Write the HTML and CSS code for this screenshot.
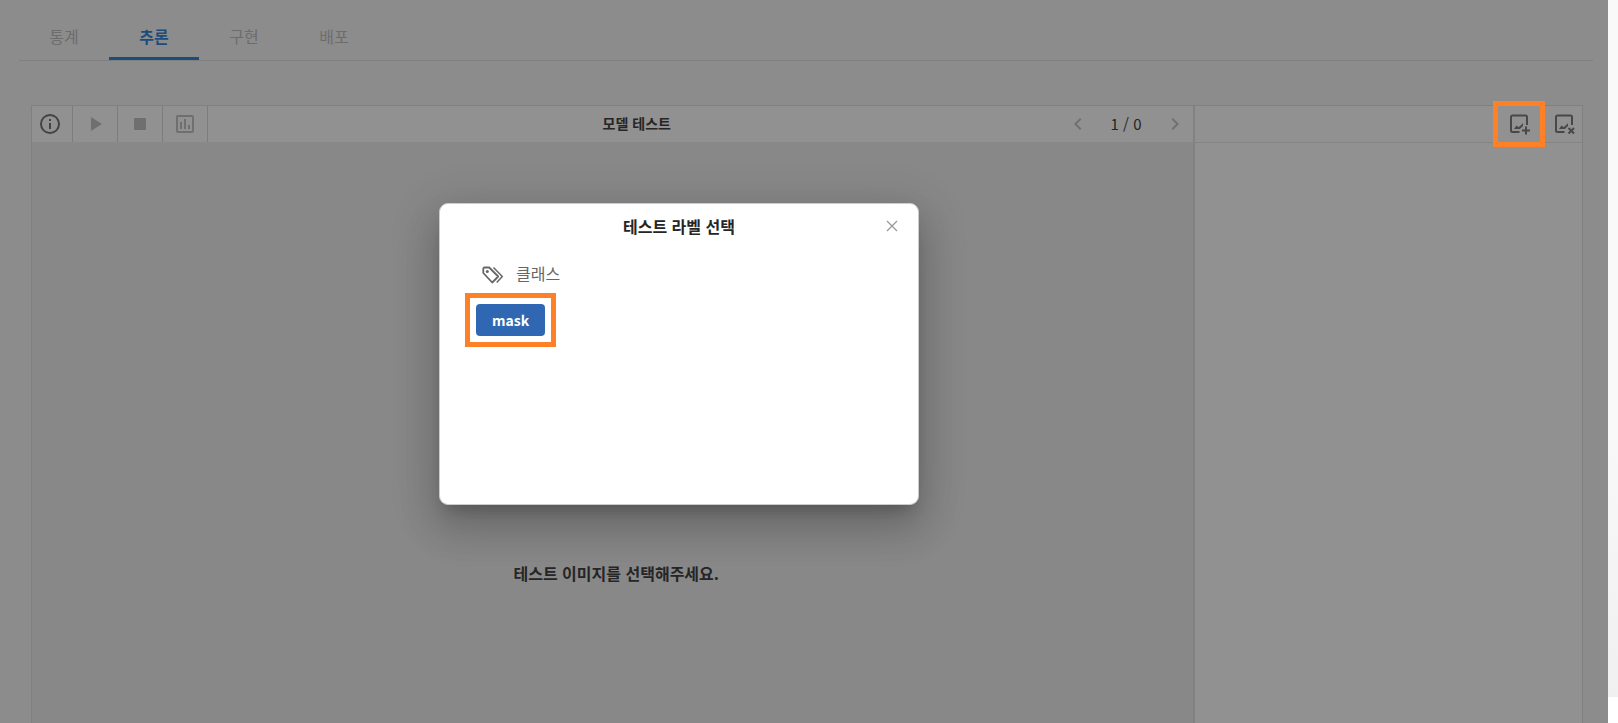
FILE: index.html
```
<!DOCTYPE html>
<html lang="ko">
<head>
<meta charset="utf-8">
<title>모델 테스트</title>
<link rel="stylesheet" href="styles.css">
</head>
<body>
<div class="app">
  <nav class="tabs">
    <a class="tab" href="#stats">통계</a>
    <a class="tab tab-active" href="#inference">추론</a>
    <a class="tab" href="#implement">구현</a>
    <a class="tab" href="#deploy">배포</a>
  </nav>
  <main class="workspace">
    <section class="viewer">
      <header class="toolbar">
        <button class="tool tool-info" aria-label="정보"><svg width="24" height="24" viewBox="0 0 24 24"><path d="M11 9h2V7h-2m1 13c-4.41 0-8-3.59-8-8s3.59-8 8-8 8 3.59 8 8-3.59 8-8 8m0-18A10 10 0 0 0 2 12a10 10 0 0 0 10 10 10 10 0 0 0 10-10A10 10 0 0 0 12 2m-1 15h2v-6h-2v6z"/></svg></button>
        <button class="tool" aria-label="실행"><svg width="24" height="24" viewBox="0 0 24 24"><path d="M8 5.1v13.8L18.900 12z"/></svg></button>
        <button class="tool" aria-label="정지"><svg width="24" height="24" viewBox="0 0 24 24"><path d="M18 18H6V6h12v12z"/></svg></button>
        <button class="tool" aria-label="차트"><svg width="24" height="24" viewBox="0 0 24 24"><path d="M9 17H7v-7h2v7m4 0h-2V7h2v10m4 0h-2v-4h2v4m2 2H5V5h14v14.100M19 3H5c-1.100 0-2 .9-2 2v14c0 1.100.9 2 2 2h14c1.100 0 2-.9 2-2V5c0-1.100-.9-2-2-2z"/></svg></button>
        <h1 class="viewer-title">모델 테스트</h1>
        <div class="pager">
          <button class="page-button" aria-label="이전"><svg width="24" height="24" viewBox="0 0 24 24"><path d="M15.410 16.580L10.830 12l4.580-4.590L14 6l-6 6 6 6 1.410-1.420z"/></svg></button>
          <span>1 / 0</span>
          <button class="page-button" aria-label="다음"><svg width="24" height="24" viewBox="0 0 24 24"><path d="M8.590 16.580L13.170 12 8.590 7.410 10 6l6 6-6 6-1.410-1.420z"/></svg></button>
        </div>
      </header>
      <div class="canvas"><p class="empty">테스트 이미지를 선택해주세요.</p></div>
    </section>
    <aside class="images">
      <header class="image-tools">
        <button class="image-button marked" aria-label="이미지 추가"><svg width="24" height="24" viewBox="0 0 24 24"><g fill="none" stroke="currentColor" stroke-width="2"><path d="M12.500 20H5.500a1.500 1.500 0 0 1-1.500-1.500V5a1.500 1.500 0 0 1 1.500-1.500H18.500a1.500 1.500 0 0 1 1.500 1.500V13M19 14.500v8M15 18.500h8"/></g><path d="M7 17l2.500-3.500 2.200 1.700 4.300-4v2.800l-3.200 3z"/></svg></button>
        <button class="image-button" aria-label="이미지 삭제"><svg width="24" height="24" viewBox="0 0 24 24"><g fill="none" stroke="currentColor" stroke-width="2"><path d="M12.500 20H5.500a1.500 1.500 0 0 1-1.500-1.500V5a1.500 1.500 0 0 1 1.500-1.500H18.500a1.500 1.500 0 0 1 1.500 1.500V13M16.500 16l5.500 5.500M22 16l-5.500 5.500"/></g><path d="M7 17l2.500-3.500 2.200 1.700 4.300-4v2.800l-3.200 3z"/></svg></button>
      </header>
    </aside>
  </main>
  <div class="dialog" role="dialog" aria-labelledby="dialog-title">
    <header class="dialog-header">
      <h2 id="dialog-title">테스트 라벨 선택</h2>
      <button class="close" aria-label="닫기"><svg width="12" height="12" viewBox="0 0 12 12"><path d="M1 1l10 10M11 1L1 11" fill="none" stroke="currentColor" stroke-width="1.300"/></svg></button>
    </header>
    <div class="dialog-body">
      <h3 class="group"><svg width="22" height="18" viewBox="0 0 22 18"><g fill="none" stroke="currentColor" stroke-width="1.800" stroke-linejoin="round"><path d="M1.300 2.300v4.700l8.900 9.500 6-6-9-9H2.200z"/><path d="M11.500 1.500l8.800 9-5.600 6" stroke-width="1.500"/></g><circle cx="5.300" cy="5.500" r="1.500"/></svg>클래스</h3>
      <button class="label marked">mask</button>
    </div>
  </div>
</div>
<div class="gutter"></div>
</body>
</html>
```
FILE: styles.css
```
* { box-sizing: border-box; }
body {
  margin: 0;
  display: flex;
  min-height: 100vh;
  background: #fff;
  font-family: "Noto Sans CJK KR", sans-serif;
  font-size: 16px;
  line-height: 24px;
  color: #252525;
}
h1, h2, h3, p { margin: 0; }
button {
  padding: 0;
  border: 0;
  background: none;
  font: inherit;
  color: inherit;
}
svg { display: block; fill: currentColor; }
.app {
  position: relative;
  flex: 1;
  display: flex;
  flex-direction: column;
  background: #8c8c8c;
}
.gutter {
  width: 10px;
  margin-bottom: 26px;
  background: linear-gradient(#f9f9f9 60%, #f0f0f0);
}
.tabs {
  display: flex;
  margin: 12px 15px 0 19px;
  border-bottom: 1px solid #7f7f7f;
}
.tab {
  width: 90px;
  height: 48px;
  padding-top: 12px;
  border-bottom: 3px solid transparent;
  text-align: center;
  text-decoration: none;
  color: #6c6c6c;
}
.tab-active {
  border-color: #1c4c7c;
  color: #1c4c7c;
  font-weight: 700;
}
.workspace {
  flex: 1;
  display: grid;
  grid-template-columns: 3fr 1fr;
  margin: 44px 25px 0 31px;
  border: 1px solid #808080;
  border-bottom: 0;
}
.viewer {
  display: flex;
  flex-direction: column;
  border-right: 2px solid #828282;
}
.toolbar {
  display: flex;
  height: 36px;
  background: #919191;
}
.tool {
  width: 45px;
  display: grid;
  place-items: center;
  border-right: 1px solid #7d7d7d;
  color: #6f6f6f;
}
.tool-info {
  width: 41px;
  padding-right: 4px;
  color: #434343;
}
.viewer-title {
  flex: 1;
  padding-top: 5px;
  text-align: center;
  font-size: 14px;
  font-weight: 700;
}
.pager {
  display: flex;
  align-items: center;
  gap: 21px;
  padding-right: 6px;
  font-size: 15px;
}
.page-button { color: #707070; }
.canvas {
  flex: 1;
  background: #888;
  text-align: center;
}
.empty {
  padding: 419px 0 0 8px;
  font-weight: 700;
}
.images { background: #919191; }
.image-tools {
  display: flex;
  justify-content: flex-end;
  align-items: center;
  gap: 21px;
  height: 37px;
  padding-right: 6px;
  border-bottom: 1px solid #848484;
}
.image-button { color: #484848; }
.marked { position: relative; }
.marked::after {
  content: "";
  position: absolute;
  inset: -11px -14px;
  border: 5px solid #ff8127;
}
.dialog {
  position: absolute;
  top: 203px;
  left: calc(50% - 365px);
  width: 480px;
  height: 302px;
  border: 1px solid #ccc;
  border-radius: 9px;
  background: #fff;
  box-shadow: 0 11px 15px -7px rgba(0, 0, 0, .2), 0 24px 38px 3px rgba(0, 0, 0, .14), 0 9px 46px 8px rgba(0, 0, 0, .12);
}
.dialog-header {
  position: relative;
  padding-top: 10px;
  text-align: center;
}
.dialog-header h2 {
  font-size: 16px;
  font-weight: 700;
}
.close {
  position: absolute;
  top: 16px;
  right: 20px;
  color: #999;
}
.dialog-body { padding: 23px 36px; }
.group {
  display: flex;
  align-items: center;
  gap: 12px;
  padding-left: 6px;
  font-size: 16px;
  font-weight: 400;
  color: #666;
}
.group svg { margin-top: 4px; }
.label {
  margin-top: 19px;
  padding: 4px 16px;
  border-radius: 4px;
  background: #2f67b2;
  color: #fff;
  font-size: 14px;
  font-weight: 700;
}
.label.marked::after { inset: -11px; }
```
